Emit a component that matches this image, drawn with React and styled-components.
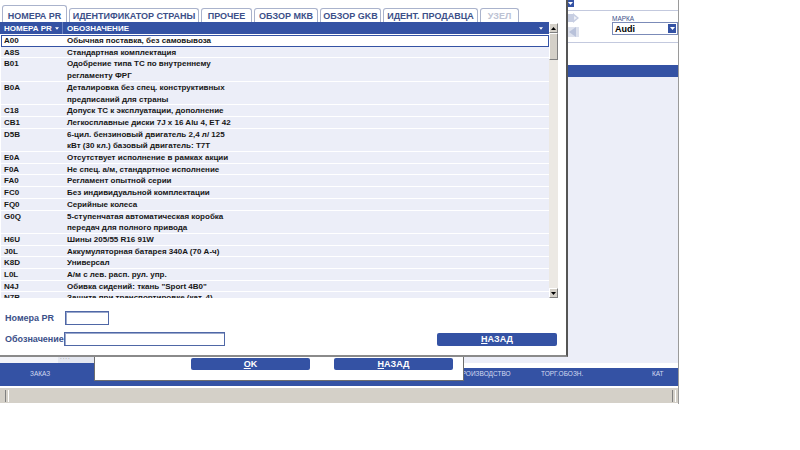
import React from "react";
import styled, { createGlobalStyle } from "styled-components";

const BLUE = "#3452a4";
const INK = "#3c5089";
const LAVENDER = "#eceef8";

const tabs = [
  { label: "НОМЕРА PR", w: 65, active: true },
  { label: "ИДЕНТИФИКАТОР СТРАНЫ", w: 130 },
  { label: "ПРОЧЕЕ", w: 51 },
  { label: "ОБЗОР МКВ", w: 64 },
  { label: "ОБЗОР GKB", w: 61 },
  { label: "ИДЕНТ. ПРОДАВЦА", w: 95 },
  { label: "УЗЕЛ", w: 39, disabled: true },
];

const rows = [
  ["A00", ["Обычная поставка, без самовывоза"]],
  ["A8S", ["Стандартная комплектация"]],
  ["B01", ["Одобрение типа ТС по внутреннему", "регламенту ФРГ"]],
  ["B0A", ["Деталировка без спец. конструктивных", "предписаний для страны"]],
  ["C18", ["Допуск ТС к эксплуатации, дополнение"]],
  ["CB1", ["Легкосплавные диски 7J x 16 Alu 4, ET 42"]],
  ["D5B", ["6-цил. бензиновый двигатель 2,4 л/ 125", "кВт (30 кл.) базовый двигатель: T7T"]],
  ["E0A", ["Отсутствует исполнение в рамках акции"]],
  ["F0A", ["Не спец. а/м, стандартное исполнение"]],
  ["FA0", ["Регламент опытной серии"]],
  ["FC0", ["Без индивидуальной комплектации"]],
  ["FQ0", ["Серийные колеса"]],
  ["G0Q", ["5-ступенчатая автоматическая коробка", "передач для полного привода"]],
  ["H6U", ["Шины 205/55 R16 91W"]],
  ["J0L", ["Аккумуляторная батарея 340A (70 А-ч)"]],
  ["K8D", ["Универсал"]],
  ["L0L", ["А/м с лев. расп. рул. упр."]],
  ["N4J", ["Обивка сидений: ткань \"Sport 4B0\""]],
  ["N7B", ["Защита при транспортировке (кат. 4)"]],
];

const navItems = [
  { label: "ЗАКАЗ", pad: 30, active: true },
  { label: "", pad: 0 },
  { label: "ПРОИЗВОДСТВО", pad: 0 },
  { label: "ТОРГ.ОБОЗН.", pad: 0 },
  { label: "КАТ", pad: 0 },
];

const Caret = ({ color = "#fff", w = 5, h = 3 }) => (
  <svg width={w} height={h} viewBox="0 0 5 3">
    <polygon points="0,0 5,0 2.5,3" fill={color} />
  </svg>
);

const CaretUp = () => (
  <svg width="5" height="3" viewBox="0 0 5 3">
    <polygon points="0,3 5,3 2.5,0" fill="#000" />
  </svg>
);

const NextIcon = () => (
  <svg width="11" height="10" viewBox="0 0 11 10">
    <rect x="0" y="1" width="5" height="8" fill="#c7cee2" />
    <polygon points="5,0 11,5 5,10" fill="#c7cee2" />
    <polygon points="6,3 9,5 6,7" fill="#eef0f7" />
  </svg>
);

const PrevIcon = () => (
  <svg width="11" height="10" viewBox="0 0 11 10">
    <rect x="0" y="0" width="11" height="10" fill="#dde1ed" />
    <polygon points="1,5 8,0 8,10" fill="#b9c2da" />
  </svg>
);

const App = () => {
  return (
    <>
      <GlobalStyle />
      <Desktop>
        <AppWindow>
          <Main>
            <LeftMain>
              <BottomRow>
                <Cell w={58} bg="#f3f4f9" />
                <Cell w={36} bg="#e4e7f0">
                  ....
                </Cell>
                <Cell w={473} bg={LAVENDER} />
              </BottomRow>
            </LeftMain>
            <RightPanel>
              <TopStrip>
                <MiniButton>
                  <Caret />
                </MiniButton>
              </TopStrip>
              <Controls>
                <ArrowCol>
                  <NextIcon />
                  <PrevIcon />
                </ArrowCol>
                <Field>
                  <FieldLabel>МАРКА</FieldLabel>
                  <Select>
                    <span>Audi</span>
                    <SelectButton>
                      <Caret />
                    </SelectButton>
                  </Select>
                </Field>
              </Controls>
              <PanelGap />
              <PanelBar />
              <PanelBody />
            </RightPanel>
          </Main>
          <NavBar>
            {navItems.map((n, i) => (
              <NavItem key={i} active={n.active} pad={n.pad}>
                {n.label}
              </NavItem>
            ))}
          </NavBar>
          <StatusBar>
            <Groove />
            <Groove />
          </StatusBar>
        </AppWindow>

        <BackDialog>
          <ButtonRow>
            <Button w={119} h={12}>
              <u>O</u>K
            </Button>
            <Button w={119} h={12}>
              <u>Н</u>АЗАД
            </Button>
          </ButtonRow>
        </BackDialog>

        <Dialog>
          <TabBar>
            {tabs.map(t => (
              <Tab key={t.label} w={t.w} active={t.active} disabled={t.disabled}>
                {t.label}
              </Tab>
            ))}
          </TabBar>
          <TableWrap>
            <Table>
              <Header>
                <HeadCell first>
                  НОМЕРА PR <Caret w={4} h={3} />
                </HeadCell>
                <HeadCell>ОБОЗНАЧЕНИЕ</HeadCell>
                <HeadCell>
                  <Caret w={4} h={3} />
                </HeadCell>
              </Header>
              <Body>
                {rows.map(([code, lines], i) => (
                  <Row key={code} selected={i === 0}>
                    <Code>{code}</Code>
                    <Desc>
                      {lines.map(l => (
                        <div key={l}>{l}</div>
                      ))}
                    </Desc>
                  </Row>
                ))}
              </Body>
            </Table>
            <Scrollbar>
              <ScrollButton>
                <CaretUp />
              </ScrollButton>
              <Thumb />
              <Track />
              <ScrollButton>
                <Caret color="#000" />
              </ScrollButton>
            </Scrollbar>
          </TableWrap>
          <Form>
            <FormRow>
              <Label>Номера PR</Label>
              <Input w={44} shift={1} />
            </FormRow>
            <FormRow>
              <Label>Обозначение</Label>
              <Input w={161} />
              <Button w={120} h={13} push>
                <u>Н</u>АЗАД
              </Button>
            </FormRow>
          </Form>
        </Dialog>
      </Desktop>
    </>
  );
};

export default App;

const GlobalStyle = createGlobalStyle`
  body {
    margin: 0;
    background: #fff;
    font-family: "Liberation Sans", Arial, sans-serif;
  }
`;

const Desktop = styled.div`
  position: relative;
  width: 800px;
  height: 450px;
  overflow: hidden;
  background: #fff;
`;

const AppWindow = styled.div`
  width: 679px;
  height: 404px;
  box-sizing: border-box;
  border-right: 1px solid #9a9a9a;
  display: flex;
  flex-direction: column;
`;

const Main = styled.div`
  display: flex;
  height: 363px;
`;

const LeftMain = styled.div`
  width: 567px;
  display: flex;
  flex-direction: column;
  justify-content: flex-end;
`;

const BottomRow = styled.div`
  display: flex;
  height: 9px;
`;

const Cell = styled.div`
  width: ${props => props.w}px;
  background: ${props => props.bg};
  font-size: 6px;
  line-height: 6px;
  color: #777;
  padding-left: 2px;
  box-sizing: border-box;
  letter-spacing: 1px;
`;

const RightPanel = styled.div`
  flex: 1;
  display: flex;
  flex-direction: column;
`;

const TopStrip = styled.div`
  height: 10px;
  border-bottom: 1px solid #c3c9de;
`;

const MiniButton = styled.div`
  width: 7px;
  height: 7px;
  background: ${BLUE};
  display: flex;
  align-items: center;
  justify-content: center;
`;

const Controls = styled.div`
  height: 31px;
  display: flex;
  border-bottom: 1px solid #c3c9de;
`;

const ArrowCol = styled.div`
  width: 12px;
  padding: 2px 0 0 1px;
  display: flex;
  flex-direction: column;
  gap: 4px;
`;

const Field = styled.div`
  margin-left: 32px;
  padding-top: 4px;
  display: flex;
  flex-direction: column;
`;

const FieldLabel = styled.div`
  font-size: 6.5px;
  line-height: 7px;
  color: ${INK};
`;

const Select = styled.div`
  width: 66px;
  height: 13px;
  box-sizing: border-box;
  border: 1px solid #7b8bb8;
  display: flex;
  align-items: center;
  justify-content: space-between;
  padding: 0 1px 0 2px;
  font-size: 9px;
  font-weight: bold;
  color: #000;
`;

const SelectButton = styled.div`
  width: 8px;
  height: 9px;
  background: ${BLUE};
  display: flex;
  align-items: center;
  justify-content: center;
`;

const PanelGap = styled.div`
  height: 22px;
`;

const PanelBar = styled.div`
  height: 12px;
  background: ${BLUE};
`;

const PanelBody = styled.div`
  flex: 1;
  background: ${LAVENDER};
`;

const NavBar = styled.div`
  height: 23px;
  display: grid;
  grid-template-columns: 95px 362px 84px 111px 1fr;
  align-items: end;
`;

const NavItem = styled.div`
  height: ${props => (props.active ? 23 : 18)}px;
  box-sizing: border-box;
  padding-top: ${props => (props.active ? 6 : 1)}px;
  padding-left: ${props => props.pad}px;
  background: ${BLUE};
  color: #d3daf1;
  font-size: 6.5px;
  line-height: 9px;
  white-space: nowrap;
  overflow: hidden;
`;

const StatusBar = styled.div`
  margin-top: 2px;
  height: 15px;
  background: #d4d0c8;
  display: flex;
  justify-content: space-between;
  align-items: center;
  padding: 0 2px 0 5px;
`;

const Groove = styled.div`
  width: 2px;
  height: 12px;
  border-left: 1px solid #808080;
  border-right: 1px solid #fff;
`;

const BackDialog = styled.div`
  position: absolute;
  left: 94px;
  top: 220px;
  width: 370px;
  height: 161px;
  box-sizing: border-box;
  border: 1px solid #6e6e6e;
  background: #fff;
  display: flex;
  flex-direction: column;
  justify-content: flex-end;
  padding-bottom: 10px;
`;

const ButtonRow = styled.div`
  display: flex;
  gap: 24px;
  padding-left: 96px;
`;

const Button = styled.button`
  width: ${props => props.w}px;
  height: ${props => props.h}px;
  margin-left: ${props => (props.push ? "auto" : "0")};
  padding: 0;
  border: none;
  border-radius: 2px;
  background: ${BLUE};
  color: #fff;
  font-family: "Liberation Sans", Arial, sans-serif;
  font-size: 9px;
  font-weight: bold;
  line-height: ${props => props.h}px;
  text-align: center;
`;

const Dialog = styled.div`
  position: absolute;
  left: 0;
  top: 0;
  width: 568px;
  height: 357px;
  box-sizing: border-box;
  background: #fff;
  border-right: 2px solid #555;
  border-bottom: 2px solid #8a8a8a;
  display: flex;
  flex-direction: column;
`;

const TabBar = styled.div`
  height: 22px;
  display: flex;
  align-items: flex-end;
  gap: 2px;
  padding-left: 2px;
`;

const Tab = styled.div`
  width: ${props => props.w}px;
  height: ${props => (props.active ? 17 : 14)}px;
  box-sizing: border-box;
  padding-top: ${props => (props.active ? 3 : 0)}px;
  border: 1px solid #aab3cc;
  border-bottom: none;
  border-radius: 3px 3px 0 0;
  display: flex;
  align-items: center;
  justify-content: center;
  font-size: 9px;
  font-weight: bold;
  white-space: nowrap;
  color: ${props => (props.disabled ? "#bcc2d3" : INK)};
`;

const TableWrap = styled.div`
  height: 276px;
  display: flex;
`;

const Table = styled.div`
  width: 549px;
  display: flex;
  flex-direction: column;
`;

const Header = styled.div`
  height: 12px;
  flex-shrink: 0;
  background: ${BLUE};
  display: grid;
  grid-template-columns: 63px 1fr 14px;
  align-items: center;
  color: #fff;
  font-size: 8px;
  font-weight: bold;
`;

const HeadCell = styled.div`
  height: 100%;
  display: flex;
  align-items: center;
  gap: 3px;
  padding-left: 4px;
  box-sizing: border-box;
  border-right: ${props => (props.first ? "1px solid #6f86c2" : "none")};
`;

const Body = styled.div`
  flex: 1;
  overflow: hidden;
  padding: 1px 0 0 1px;
`;

const Row = styled.div`
  display: grid;
  grid-template-columns: 63px 1fr;
  background: ${props => (props.selected ? "#fff" : LAVENDER)};
  box-shadow: ${props =>
    props.selected ? `inset 0 0 0 1px ${BLUE}` : "inset 0 -1px 0 #fff"};
  font-size: 8px;
  font-weight: bold;
  line-height: 11.7px;
  color: #161616;
  white-space: nowrap;
`;

const Code = styled.div`
  padding-left: 3px;
`;

const Desc = styled.div`
  padding-left: 3px;
`;

const Scrollbar = styled.div`
  width: 9px;
  margin-top: 1px;
  background: #ece9e4;
  display: flex;
  flex-direction: column;
`;

const ScrollButton = styled.div`
  height: 10px;
  box-sizing: border-box;
  background: #d4d0c8;
  border: 1px solid;
  border-color: #fff #808080 #808080 #fff;
  display: flex;
  align-items: center;
  justify-content: center;
`;

const Thumb = styled(ScrollButton)`
  height: 27px;
`;

const Track = styled.div`
  flex: 1;
`;

const Form = styled.div`
  flex: 1;
  padding: 13px 9px 0 5px;
  display: flex;
  flex-direction: column;
  gap: 7px;
`;

const FormRow = styled.div`
  height: 14px;
  display: flex;
  align-items: center;
`;

const Label = styled.div`
  width: 59px;
  flex-shrink: 0;
  overflow: hidden;
  white-space: nowrap;
  font-size: 9px;
  font-weight: bold;
  color: ${INK};
`;

const Input = styled.div`
  width: ${props => props.w}px;
  height: 14px;
  margin-left: ${props => props.shift || 0}px;
  box-sizing: border-box;
  border: 1px solid #4f67a6;
  box-shadow: inset 1px 1px 0 #9aa8cc;
  background: #fff;
`;
